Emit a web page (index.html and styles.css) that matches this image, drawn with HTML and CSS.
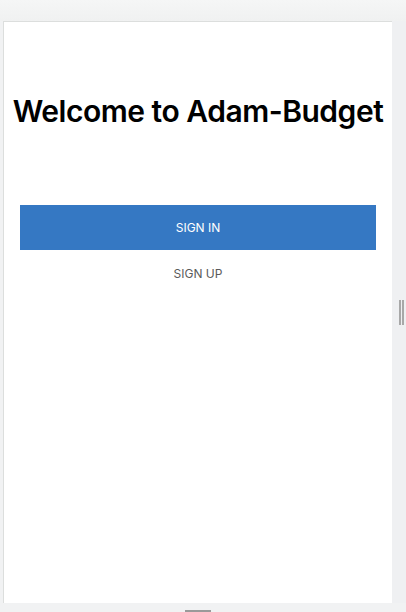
FILE: index.html
```html
<!DOCTYPE html>
<html>
<head>
<meta charset="utf-8">
<link rel="stylesheet" href="styles.css">
</head>
<body>
<div class="frame">
  <div class="topbar"></div>
  <div class="row">
    <main class="panel">
      <h1 class="title">Welcome to Adam-Budget</h1>
      <div class="actions">
        <button class="btn btn-primary">SIGN IN</button>
        <button class="btn btn-link">SIGN UP</button>
      </div>
    </main>
    <aside class="side">
      <span class="grip"></span>
    </aside>
  </div>
  <div class="bottom"><span class="hgrip"></span></div>
</div>
</body>
</html>
```

FILE: styles.css
```css
html, body {
  margin: 0;
  padding: 0;
  background: #f1f2f3;
}
.frame {
  width: 406px;
  height: 612px;
  display: flex;
  flex-direction: column;
  overflow: hidden;
}
.topbar {
  height: 21px;
  background: linear-gradient(#f5f6f6, #f0f1f1);
}
.row {
  display: flex;
  height: 582px;
  padding-left: 3px;
}
.panel {
  width: 388px;
  background: #fff;
  border-top: 1px solid #dcdedd;
  border-left: 1px solid #dcdedd;
  display: flex;
  flex-direction: column;
  align-items: center;
  font-family: "Inter", "Liberation Sans", sans-serif;
}
.title {
  margin: 71px 0 0;
  font-size: 30px;
  line-height: 36px;
  font-weight: 600;
  color: #000;
  letter-spacing: -0.48px;
  white-space: nowrap;
}
.actions {
  margin-top: 76px;
  width: 100%;
  padding: 0 16px;
  box-sizing: border-box;
  display: flex;
  flex-direction: column;
}
.btn {
  font-family: "Inter", "Liberation Sans", sans-serif;
  font-size: 12px;
  border: 0;
  padding: 0;
  cursor: pointer;
}
.btn-primary {
  height: 45px;
  background: #3578c3;
  color: #fff;
}
.btn-link {
  height: 46px;
  background: none;
  color: #5a5a5a;
}
.side {
  flex: 1;
  background: #eff0f2;
  display: flex;
  align-items: flex-start;
  padding-left: 7px;
}
.grip {
  margin-top: 279px;
  width: 1px;
  height: 25px;
  border-left: 2px solid #a8a8a8;
  border-right: 2px solid #a8a8a8;
}
.bottom {
  flex: 1;
  display: flex;
  align-items: flex-end;
}
.hgrip {
  margin-left: 185px;
  width: 26px;
  height: 2px;
  background: #9a9a9a;
}
```
